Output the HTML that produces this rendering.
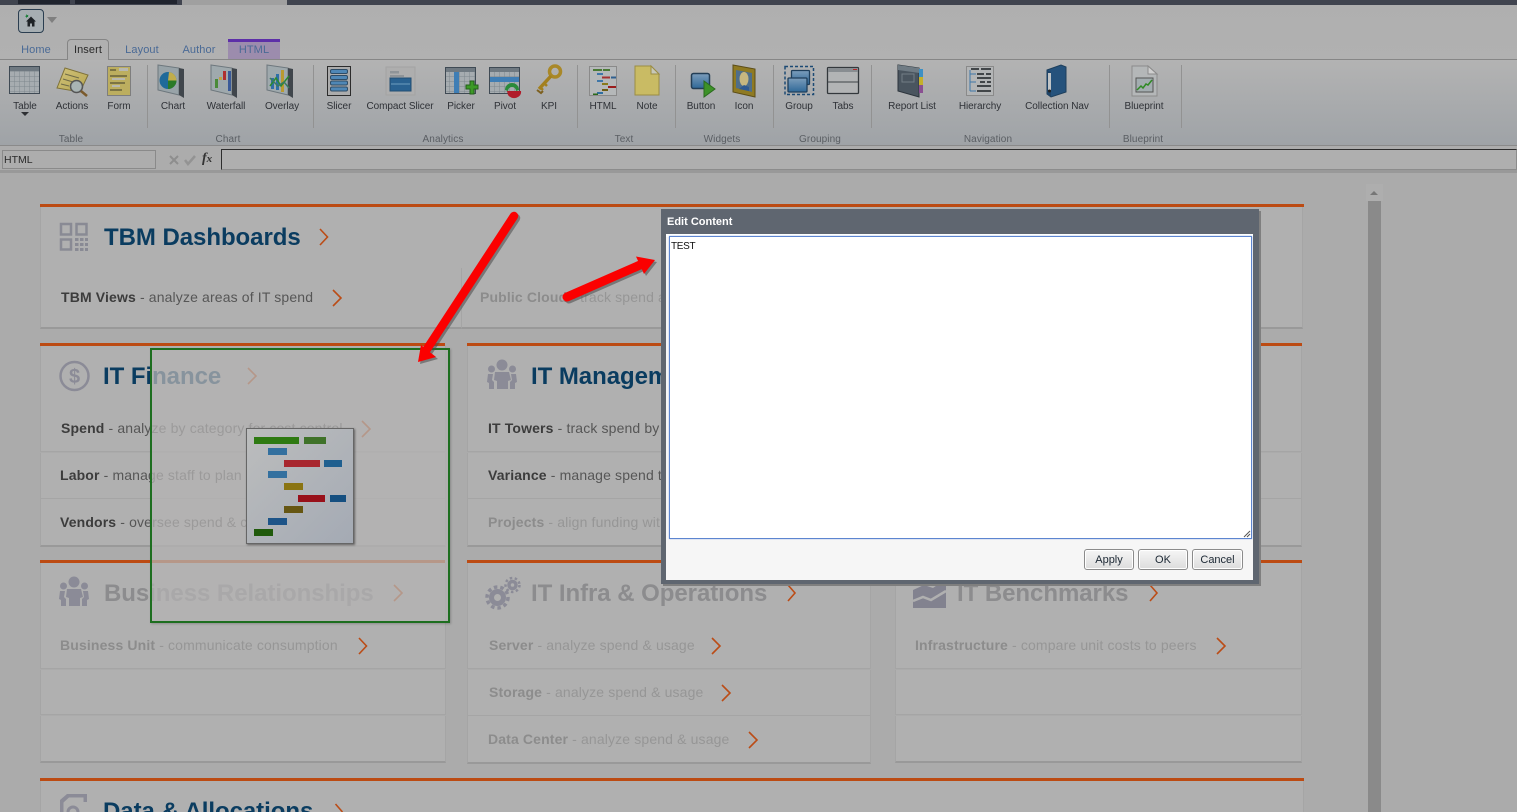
<!DOCTYPE html>
<html><head><meta charset="utf-8"><title>Edit Content</title>
<style>
html,body{margin:0;padding:0;width:1517px;height:812px;overflow:hidden;background:#ababab;font-family:"Liberation Sans",sans-serif}
body{position:relative}
div,span.a{position:absolute;box-sizing:border-box}
.o{background:#bc4b13;height:3px}
.c{background:#b0b0b0;border:1px solid #a5a5a5;border-top:0}
.e{border-bottom:2px solid #999}
.s{background:#929292;width:1px;top:65px;height:63px}
.l{font-size:10px;letter-spacing:-.05px;color:#2e3136;top:101px;line-height:12px;width:90px;text-align:center;white-space:nowrap}
.g{font-size:10px;letter-spacing:.1px;color:#5a5e63;top:134px;line-height:12px;width:90px;text-align:center}
.tb{font-size:11px;letter-spacing:.1px;color:#4a6a96;top:44px;line-height:12px;width:60px;text-align:center}
.h{font-size:24px;font-weight:bold;line-height:30px;letter-spacing:-.05px;color:#0a3c60;white-space:nowrap}
.x{color:#8c8c8e}
.r{font-size:14px;line-height:18px;letter-spacing:.14px;color:#565656;white-space:nowrap}
.r b{color:#3c3c3c}
.r.d{color:#969696}.r.d b{color:#8c8c8c}
.bar{height:7px}
.btn{top:549px;height:21px;border:1px solid #8b8b8b;border-radius:3px;background:linear-gradient(#f6f6f6,#dcdcdc);font-size:11px;line-height:21px;text-align:center;color:#1b2733;box-shadow:inset 0 0 0 1px #fff}
</style></head><body>

<!-- top bar -->
<div style="left:0;top:0;width:1517px;height:5px;background:#40444f"></div>
<div style="left:18px;top:0;width:52px;height:4px;background:#20242e"></div>
<div style="left:75px;top:0;width:102px;height:4px;background:#20242e"></div>
<div style="left:182px;top:0;width:105px;height:5px;background:#a0a0a0"></div>

<!-- ribbon -->
<div style="left:0;top:5px;width:1517px;height:54px;background:linear-gradient(#afafaf,#b1b1b1)"></div>
<div style="left:0;top:59px;width:1517px;height:87px;background:linear-gradient(#b3b3b3,#9fa3a7);border-top:1px solid #868686;border-bottom:1px solid #8a8a8a"></div>
<div style="left:18px;top:9px;width:26px;height:24px;border:1px solid #2b3e50;border-radius:4px;background:#a6aeb2"></div>
<div style="left:67px;top:39px;width:42px;height:21px;background:#b0b0b0;border:1px solid #858585;border-bottom:0;border-radius:4px 4px 0 0"></div>
<div style="left:228px;top:39px;width:52px;height:20px;background:#9c8cad;border-top:3px solid #5d2fa8"></div>
<div class="tb" style="left:6px">Home</div>
<div class="tb" style="left:58px;color:#2a2a2a">Insert</div>
<div class="tb" style="left:112px">Layout</div>
<div class="tb" style="left:169px">Author</div>
<div class="tb" style="left:224px">HTML</div>

<div class="s" style="left:147px"></div><div class="s" style="left:313px"></div><div class="s" style="left:577px"></div><div class="s" style="left:675px"></div><div class="s" style="left:773px"></div><div class="s" style="left:871px"></div><div class="s" style="left:1109px"></div><div class="s" style="left:1181px"></div>

<div class="l" style="left:-20px">Table</div><div class="l" style="left:27px">Actions</div><div class="l" style="left:74px">Form</div><div class="l" style="left:128px">Chart</div><div class="l" style="left:181px">Waterfall</div><div class="l" style="left:237px">Overlay</div><div class="l" style="left:294px">Slicer</div><div class="l" style="left:355px">Compact Slicer</div><div class="l" style="left:416px">Picker</div><div class="l" style="left:460px">Pivot</div><div class="l" style="left:504px">KPI</div><div class="l" style="left:558px">HTML</div><div class="l" style="left:602px">Note</div><div class="l" style="left:656px">Button</div><div class="l" style="left:699px">Icon</div><div class="l" style="left:754px">Group</div><div class="l" style="left:798px">Tabs</div><div class="l" style="left:867px">Report List</div><div class="l" style="left:935px">Hierarchy</div><div class="l" style="left:1012px">Collection Nav</div><div class="l" style="left:1099px">Blueprint</div>
<div class="g" style="left:26px">Table</div><div class="g" style="left:183px">Chart</div><div class="g" style="left:398px">Analytics</div><div class="g" style="left:579px">Text</div><div class="g" style="left:677px">Widgets</div><div class="g" style="left:775px">Grouping</div><div class="g" style="left:943px">Navigation</div><div class="g" style="left:1098px">Blueprint</div>

<!-- formula bar -->
<div style="left:0;top:146px;width:1517px;height:24px;background:#acacac"></div>
<div style="left:2px;top:150px;width:154px;height:19px;border:1px solid #8a8a8a;background:#adadad;font-size:10.500px;line-height:19px;color:#2a2a2a;padding-left:1px">HTML</div>
<div style="left:221px;top:149px;width:1296px;height:21px;border:1px solid #8c8c8c;border-left:1px solid #2d2d2d;border-top:1px solid #2d2d2d;background:#afafaf"></div>
<div style="left:202px;top:151px;font:italic bold 14px/16px 'Liberation Serif',serif;color:#333">f<span style="font-size:11px">x</span></div>
<div style="left:0;top:170px;width:1517px;height:3px;background:#999"></div>

<!-- scrollbar -->
<div style="left:1366px;top:184px;width:17px;height:17px;background:#aeaeae"></div>
<div style="left:1368px;top:201px;width:13px;height:611px;background:#8a8a8a"></div>

<!-- row 1 -->
<div class="c" style="left:40px;top:206px;width:1263px;height:63px"></div>
<div class="c e" style="left:40px;top:268px;width:422px;height:61px"></div>
<div class="c e" style="left:461px;top:268px;width:842px;height:61px"></div>
<div class="o" style="left:40px;top:204px;width:1264px"></div>
<div class="h" style="left:104px;top:223px">TBM Dashboards</div>
<div class="r" style="left:61px;top:288px"><b>TBM Views</b> - analyze areas of IT spend</div>
<div class="r d" style="left:480px;top:288px"><b>Public Cloud</b> - track spend and usage</div>

<!-- row 2 -->
<div class="c" style="left:40px;top:345px;width:406px;height:63px"></div>
<div class="c" style="left:40px;top:407px;width:406px;height:45px"></div>
<div class="c" style="left:40px;top:453px;width:406px;height:46px"></div>
<div class="c e" style="left:40px;top:499px;width:406px;height:48px"></div>
<div class="o" style="left:40px;top:343px;width:405px"></div>
<div class="c" style="left:467px;top:345px;width:404px;height:63px"></div>
<div class="c" style="left:467px;top:407px;width:404px;height:45px"></div>
<div class="c" style="left:467px;top:453px;width:404px;height:46px"></div>
<div class="c e" style="left:467px;top:499px;width:404px;height:48px"></div>
<div class="o" style="left:467px;top:343px;width:404px"></div>
<div class="c" style="left:895px;top:345px;width:407px;height:63px"></div>
<div class="c" style="left:895px;top:407px;width:407px;height:45px"></div>
<div class="c" style="left:895px;top:453px;width:407px;height:46px"></div>
<div class="c e" style="left:895px;top:499px;width:407px;height:48px"></div>
<div class="o" style="left:895px;top:343px;width:407px"></div>
<div class="h" style="left:103px;top:362px">IT Finance</div>
<div class="h" style="left:531px;top:362px">IT Management</div>
<div class="r" style="left:61px;top:419px"><b>Spend</b> - analyze by category for cost control</div>
<div class="r" style="left:60px;top:466px"><b>Labor</b> - manage staff to plan costs</div>
<div class="r" style="left:60px;top:513px"><b>Vendors</b> - oversee spend &amp; contracts</div>
<div class="r" style="left:488px;top:419px"><b>IT Towers</b> - track spend by tower</div>
<div class="r" style="left:488px;top:466px"><b>Variance</b> - manage spend to plan</div>
<div class="r d" style="left:488px;top:513px"><b>Projects</b> - align funding with goals</div>

<!-- row 3 -->
<div class="c" style="left:40px;top:562px;width:406px;height:63px"></div>
<div class="c" style="left:40px;top:624px;width:406px;height:45px"></div>
<div class="c" style="left:40px;top:670px;width:406px;height:45px"></div>
<div class="c e" style="left:40px;top:716px;width:406px;height:47px"></div>
<div class="o" style="left:40px;top:560px;width:405px"></div>
<div class="c" style="left:467px;top:562px;width:404px;height:63px"></div>
<div class="c" style="left:467px;top:624px;width:404px;height:45px"></div>
<div class="c" style="left:467px;top:670px;width:404px;height:46px"></div>
<div class="c e" style="left:467px;top:716px;width:404px;height:48px"></div>
<div class="o" style="left:467px;top:560px;width:404px"></div>
<div class="c" style="left:895px;top:562px;width:407px;height:63px"></div>
<div class="c" style="left:895px;top:624px;width:407px;height:45px"></div>
<div class="c" style="left:895px;top:670px;width:407px;height:45px"></div>
<div class="c e" style="left:895px;top:716px;width:407px;height:47px"></div>
<div class="o" style="left:895px;top:560px;width:407px"></div>
<div class="h x" style="left:104px;top:579px">Business Relationships</div>
<div class="h x" style="left:531px;top:579px">IT Infra &amp; Operations</div>
<div class="h x" style="left:957px;top:579px">IT Benchmarks</div>
<div class="r d" style="left:60px;top:636px"><b>Business Unit</b> - communicate consumption</div>
<div class="r d" style="left:489px;top:636px"><b>Server</b> - analyze spend &amp; usage</div>
<div class="r d" style="left:489px;top:683px"><b>Storage</b> - analyze spend &amp; usage</div>
<div class="r d" style="left:488px;top:730px"><b>Data Center</b> - analyze spend &amp; usage</div>
<div class="r d" style="left:915px;top:636px"><b>Infrastructure</b> - compare unit costs to peers</div>

<!-- row 4 -->
<div class="c" style="left:40px;top:780px;width:1264px;height:32px;border-bottom:0"></div>
<div class="o" style="left:40px;top:778px;width:1264px"></div>
<div class="h" style="left:103px;top:797px;height:15px;overflow:hidden">Data &amp; Allocations</div>

<!-- icons: ribbon + cards -->
<svg style="position:absolute;left:0;top:0" width="1517" height="812" viewBox="0 0 1517 812">
<defs>
<pattern id="gr" width="5" height="5" patternUnits="userSpaceOnUse" x="10" y="72"><rect width="5" height="5" fill="#a6acb0"/><path d="M5 0V5M0 5H5" stroke="#7e878e" stroke-width="1"/></pattern>
<linearGradient id="bl" x1="0" y1="0" x2="0" y2="1"><stop offset="0" stop-color="#7c9dbb"/><stop offset="1" stop-color="#2f6898"/></linearGradient>
<linearGradient id="gd" x1="0" y1="0" x2="1" y2="1"><stop offset="0" stop-color="#d0c27a"/><stop offset="1" stop-color="#b7a650"/></linearGradient>
</defs>
<!-- home -->
<path d="M26 21.500l5-5 5 5h-1.500v5h-2.500v-3h-2v3h-2.500v-5z" fill="#1d2226"/><path d="M26.500 14l.7 1.300 1.400-.4-.9 1.200.9 1.200-1.400-.4-.7 1.300-.2-1.500-1.400-.6 1.400-.5z" fill="#0b7a2c"/>
<path d="M47 17h10l-5 6z" fill="#7f7f7f"/>
<path d="M21 112h8l-4 4z" fill="#2d2f33"/>
<!-- X check -->
<path d="M170 156l8 8M178 156l-8 8" stroke="#8e8e8e" stroke-width="2"/><path d="M185 160l3 4 7-8" fill="none" stroke="#939393" stroke-width="2.500"/>
<path d="M1370 195l4-4 4 4z" fill="#777"/>
<!-- Table -->
<rect x="9.500" y="66.500" width="30" height="27" fill="url(#gr)" stroke="#3f4a54"/><rect x="10" y="67" width="29" height="4" fill="#6f7981"/>
<!-- Actions -->
<path d="M57 88l8-20 23 7-8 17z" fill="url(#gd)" stroke="#7e7138"/><path d="M65 74l14 4M63 79l10 3M61 84l8 2" stroke="#6e6a48"/><circle cx="76.500" cy="86.500" r="6" fill="#a9b4b4" stroke="#555"  stroke-width="1.500"/><path d="M81 91l6 5" stroke="#7b5a2c" stroke-width="2.500"/>
<!-- Form -->
<rect x="107.500" y="66.500" width="23" height="29" fill="#bcae5f" stroke="#7e7e7e"/><path d="M110 70h6M110 76h17M110 83h15M110 90h12" stroke="#3b3a28"/><rect x="119" y="68" width="9" height="3" fill="#b8b8b0"/><rect x="112" y="78" width="13" height="2" fill="#b8b8b0"/><rect x="112" y="85" width="8" height="2" fill="#b8b8b0"/>
<!-- Chart -->
<path d="M158 65l21 3v27l-21-5z" fill="#98a3a8" stroke="#6d777d"/><path d="M179 68l5 1v29l-5-3z" fill="#40464c"/><circle cx="168" cy="80.500" r="8.500" fill="#1f6a9a"/><path d="M168 80.500l1-8.500a8.500 8.500 0 0 1 7.500 8.500z" fill="#c0ad4b"/><path d="M168 80.500h8.500a8.500 8.500 0 0 1-8.500 8.500z" fill="#2a7a28"/>
<!-- Waterfall -->
<path d="M211 65l21 3v27l-21-5z" fill="#9fa9ad" stroke="#6d777d"/><path d="M232 68l5 1v29l-5-3z" fill="#40464c"/><rect x="215" y="79" width="3" height="9" fill="#4a8a3a"/><rect x="219" y="77" width="3" height="3" fill="#c0a040"/><rect x="223" y="71" width="3" height="9" fill="#b03030"/><rect x="228" y="71" width="3" height="20" fill="#3a5a98"/>
<!-- Overlay -->
<path d="M267 65l21 3v27l-21-5z" fill="#9fa9ad" stroke="#6d777d"/><path d="M288 68l5 1v29l-5-3z" fill="#40464c"/><rect x="271" y="78" width="3" height="11" fill="#2f6fa8"/><rect x="276" y="74" width="3" height="16" fill="#2f6fa8"/><rect x="281" y="70" width="3" height="22" fill="#b99a30"/><path d="M270 86l6-8 5 8 8-10" fill="none" stroke="#2a8a30" stroke-width="1.500"/><path d="M270 78l8 8 6-4 5 6" fill="none" stroke="#3a7a60" stroke-width="1.500"/>
<!-- Slicer -->
<rect x="327.500" y="66.500" width="23" height="29" fill="#acacac" stroke="#2c2c2c"/><g fill="#4f87b6" stroke="#2e4c66"><rect x="330.500" y="69.500" width="17" height="4" rx="1.500"/><rect x="330.500" y="75.500" width="17" height="4" rx="1.500"/><rect x="330.500" y="81" width="17" height="4" rx="1.500"/><rect x="330.500" y="87" width="17" height="4" rx="1.500"/></g>
<!-- Compact slicer -->
<rect x="386" y="67" width="29" height="28" fill="#aeaeae" stroke="#a3a3a3"/><rect x="390" y="71" width="9" height="2.500" fill="#8f9498"/><rect x="390" y="75" width="14" height="2" fill="#8f9498"/><rect x="390" y="78" width="21" height="13" fill="#2a6291" stroke="#234e72"/><path d="M391 84h19" stroke="#6f9dc0"/>
<!-- Picker -->
<rect x="445.500" y="67.500" width="30" height="26" fill="url(#gr)" stroke="#3f4a54"/><rect x="446" y="68" width="29" height="4" fill="#6f7981"/><rect x="454" y="72" width="5" height="21" fill="#3f7eb5"/><path d="M466 85h4v-4h4v4h4v4h-4v5h-4v-5h-4z" fill="#3c9a26" stroke="#23601a"/>
<!-- Pivot -->
<rect x="489.500" y="67.500" width="30" height="26" fill="url(#gr)" stroke="#3f4a54"/><rect x="490" y="68" width="29" height="4" fill="#6f7981"/><rect x="490" y="77" width="29" height="5" fill="#3f7eb5"/><path d="M505 90a7 7 0 0 1 14 0l-3 1a4 4 0 0 0-8 0z" fill="#2a8a3a"/><path d="M507 91h14a7 6 0 0 1-13 4z" fill="#b01c2a"/>
<!-- KPI -->
<circle cx="555" cy="71.500" r="5.500" fill="none" stroke="#a98828" stroke-width="3.500"/><path d="M551 76l-12 13" stroke="#a3801f" stroke-width="3.500"/><path d="M540 87l3 3M544 83l3 3" stroke="#a3801f" stroke-width="2.500"/><path d="M537 90l4 3 2-2" fill="none" stroke="#7d6020" stroke-width="2"/>
<!-- HTML -->
<rect x="589.500" y="66.500" width="27" height="29" fill="#b5b8b9" stroke="#8a8a8a"/><rect x="593" y="69" width="9" height="2" fill="#4a7a35"/><rect x="603" y="69" width="7" height="2" fill="#4a7a35"/><rect x="597" y="73" width="6" height="2" fill="#3f77a8"/><rect x="602" y="76.500" width="8" height="2" fill="#a53030"/><rect x="611" y="76.500" width="5" height="2" fill="#2f5f8f"/><rect x="597" y="80" width="6" height="2" fill="#3f77a8"/><rect x="602" y="83" width="6" height="2" fill="#8a7a1a"/><rect x="608" y="86" width="8" height="2" fill="#9a1c1c"/><rect x="602" y="89" width="6" height="2" fill="#6d5d14"/><rect x="597" y="92" width="6" height="2" fill="#2f6fa0"/><rect x="593" y="93.500" width="5" height="1.500" fill="#2b6a1c"/>
<!-- Note -->
<path d="M635 66h16l8 8v21h-24z" fill="#c9bb64" stroke="#9a8d44"/><path d="M651 66v8h8z" fill="#c8c8b8" stroke="#9a8d44"/>
<!-- Button -->
<rect x="691.500" y="73.500" width="18" height="15" rx="2" fill="url(#bl)" stroke="#233e56" stroke-width="1.500"/><path d="M704 81l11 8-11 8z" fill="#3d9228" stroke="#2a6a1e"/>
<!-- Icon -->
<path d="M733 65l22 4v28l-22-5z" fill="#8f7a22" stroke="#5c4d18"/><path d="M736 70l16 3v19l-16-4z" fill="#4f6e8a"/><ellipse cx="744" cy="79" rx="4.500" ry="7" fill="#c7b780"/><path d="M739 89l10 2v-4l-5-2z" fill="#2f5a90"/>
<!-- Group -->
<rect x="785" y="66.500" width="28.500" height="28" fill="none" stroke="#1c4a74" stroke-width="1.500" stroke-dasharray="3 2"/><rect x="791.500" y="70.500" width="18" height="14" rx="1" fill="url(#bl)" stroke="#1f3f5c" stroke-width="1.300"/><rect x="788" y="78" width="19" height="14" rx="1" fill="url(#bl)" stroke="#1f3f5c" stroke-width="1.300"/>
<!-- Tabs -->
<rect x="827.500" y="67.500" width="31" height="26" rx="1" fill="#b2b4b5" stroke="#33383c" stroke-width="1.300"/><rect x="828" y="68" width="30" height="4" fill="#888d91"/><path d="M828 82h30" stroke="#3f4448"/><path d="M853 69.500h4" stroke="#b52a2a"/>
<!-- Report list -->
<path d="M898 65l21 3v29l-21-6z" fill="#4a555f" stroke="#2c343c"/><path d="M898 65l21 3 .5 5-21.500-3z" fill="#6f7b84"/><rect x="902" y="74" width="12" height="8" fill="none" stroke="#727d85"/><rect x="919" y="69" width="4" height="8" fill="#3d90c4"/><rect x="919" y="77" width="4" height="8" fill="#c4b02a"/><rect x="919" y="85" width="4" height="8" fill="#8a4f92"/>
<!-- Hierarchy -->
<rect x="966.500" y="66.500" width="27" height="29" fill="#b3b5b6" stroke="#8a8a8a"/><path d="M970 70v21M970 74h6M970 82h6M970 91h6" fill="none" stroke="#3f78a8"/><path d="M971 69h8M981 69h10M977 74h7M986 74h5M977 78h14M980 82h5M987 82h4M977 86h14M977 91h14" stroke="#33373a" stroke-width="1.800"/>
<!-- Collection -->
<path d="M1047 70l14-5 5 2v25l-15 5-4-3z" fill="#25527c" stroke="#1e3f5c"/><path d="M1051 72v25l-4-3V70z" fill="#1f4468"/><rect x="1048" y="73" width="3" height="17" fill="#c0c4c6"/><circle cx="1049.500" cy="91" r="1.500" fill="#222"/>
<!-- Blueprint -->
<path d="M1132 66h16l9 8v22h-25z" fill="#b4b7b8" stroke="#8b8b8b"/><path d="M1148 66v8h9z" fill="#cfcfcf" stroke="#8b8b8b"/><rect x="1136" y="78" width="17" height="14" fill="#a3adb0" stroke="#555"/><path d="M1137 90l4-4 2 2 3-4 2 1 4-5" fill="none" stroke="#2f8a24" stroke-width="1.500"/>

<!-- grid icon -->
<g fill="none" stroke="#898a94" stroke-width="2.500"><rect x="61" y="224" width="10" height="10.500"/><rect x="76.500" y="224" width="10" height="10.500"/><rect x="61" y="239.500" width="10" height="10"/></g>
<g fill="#898a94"><rect x="75" y="238" width="3.500" height="3"/><rect x="80" y="238" width="3.500" height="3"/><rect x="85" y="238" width="3" height="3"/><rect x="75" y="243" width="3.500" height="3"/><rect x="80" y="243" width="3.500" height="3"/><rect x="85" y="243" width="3" height="3"/><rect x="75" y="248" width="3.500" height="3"/><rect x="80" y="248" width="3.500" height="3"/><rect x="85" y="248" width="3" height="3"/></g>
<!-- dollar -->
<circle cx="74.500" cy="376" r="14" fill="none" stroke="#8b8b97" stroke-width="2.500"/><text x="74.500" y="383" text-anchor="middle" font-family="Liberation Sans" font-weight="bold" font-size="20" fill="#8b8b97">$</text>
<!-- people -->
<g fill="#8b8b97"><circle cx="502" cy="365" r="5.500"/><path d="M495 372h14l2 8-3 1v8h-11v-8l-3-1z"/><circle cx="491.500" cy="369" r="3.500"/><path d="M488 374h5l-1 6 2 2v7h-5v-6l-2-1z"/><circle cx="512.500" cy="369" r="3.500"/><path d="M511 374h5l1 8-2 1v6h-5v-7l2-2z"/></g>
<g fill="#8b8b97"><circle cx="74" cy="582" r="5.500"/><path d="M67 589h14l2 8-3 1v8H69v-8l-3-1z"/><circle cx="63.500" cy="586" r="3.500"/><path d="M60 591h5l-1 6 2 2v7h-5v-6l-2-1z"/><circle cx="84.500" cy="586" r="3.500"/><path d="M83 591h5l1 8-2 1v6h-5v-7l2-2z"/></g>
<!-- gears -->
<g fill="none" stroke="#8b8b97"><circle cx="497.500" cy="597.500" r="6" stroke-width="5"/><circle cx="497.500" cy="597.500" r="10.500" stroke-width="3.500" stroke-dasharray="3.500 3"/><circle cx="512.500" cy="585" r="3.500" stroke-width="3.500"/><circle cx="512.500" cy="585" r="7" stroke-width="2.500" stroke-dasharray="2.500 2.500"/></g>
<!-- benchmark -->
<path d="M913 590l11-5 9 3 13-9v29h-33z" fill="#82828f"/><path d="M913 601l10-4 8 3 15-9" fill="none" stroke="#b0b0b0" stroke-width="2.500"/>
<!-- data -->
<path d="M60 812v-12l7-6h20v8h-3.500v-4.500H69l-5.500 5v9.500z" fill="#8b8b97"/><circle cx="73" cy="812" r="5" fill="none" stroke="#8b8b97" stroke-width="3"/>
<!-- chevrons -->
<g fill="none" stroke="#bb4c16" stroke-width="1.600"><path d="M320 229l7.500 8-7.500 8"/><path d="M333 290l8 8-8 8"/><path d="M788 585l7 8-7 8"/><path d="M1150 585l7 8-7 8"/><path d="M359 638l7.500 8-7.500 8"/><path d="M712 638l8 8-8 8"/><path d="M722 685l8 8-8 8"/><path d="M749 732l8 8-8 8"/><path d="M1217 638l8 8-8 8"/><path d="M335.500 804l7 8"/><path d="M248 368l8 8-8 8"/><path d="M362 421l8 8-8 8"/><path d="M394 585l8 8-8 8"/></g>
</svg>

<!-- drag rectangle -->
<div style="left:150px;top:348px;width:300px;height:275px;border:2px solid #1d6e1f;background:rgba(180,178,178,.74);box-shadow:1px 1px 2px rgba(0,0,0,.2)"></div>
<div style="left:246px;top:428px;width:108px;height:116px;border:1px solid #666;background:linear-gradient(135deg,#bcbdbd,#a4aab4);box-shadow:1px 1px 2px rgba(0,0,0,.45)"></div>
<div class="bar" style="left:254px;top:437px;width:45px;background:#2e7a12"></div>
<div class="bar" style="left:304px;top:437px;width:22px;background:#3f7229"></div>
<div class="bar" style="left:268px;top:448px;width:19px;background:#33709f"></div>
<div class="bar" style="left:284px;top:460px;width:36px;background:#a8272f"></div>
<div class="bar" style="left:324px;top:460px;width:18px;background:#1f5f8f"></div>
<div class="bar" style="left:268px;top:471px;width:19px;background:#33709f"></div>
<div class="bar" style="left:284px;top:483px;width:19px;background:#8a7412"></div>
<div class="bar" style="left:298px;top:495px;width:27px;background:#98101a"></div>
<div class="bar" style="left:330px;top:495px;width:16px;background:#154f80"></div>
<div class="bar" style="left:284px;top:506px;width:19px;background:#665612"></div>
<div class="bar" style="left:268px;top:518px;width:19px;background:#1d5488"></div>
<div class="bar" style="left:254px;top:529px;width:19px;background:#205a0c"></div>

<!-- red arrows -->
<svg style="position:absolute;left:0;top:0" width="1517" height="812" viewBox="0 0 1517 812">
<g opacity=".55" transform="translate(2 2)">
<path d="M514 216L427 349" stroke="#4a4a4a" stroke-width="8.500" stroke-linecap="round" fill="none"/><path d="M418 362l3-17 15 12z" fill="#4a4a4a"/>
<path d="M567 297L640 265" stroke="#4a4a4a" stroke-width="9" stroke-linecap="round" fill="none"/><path d="M655 260l-19-3.500 8 17.500z" fill="#4a4a4a"/>
</g>
<path d="M514 216L427 349" stroke="#fb0000" stroke-width="8.500" stroke-linecap="round" fill="none"/><path d="M418 362l3-17 15 12z" fill="#fb0000"/>
<path d="M567 297L640 265" stroke="#fb0000" stroke-width="9" stroke-linecap="round" fill="none"/><path d="M655 260l-19-3.500 8 17.500z" fill="#fb0000"/>
</svg>

<!-- dialog -->
<div style="left:661px;top:209px;width:598px;height:375px;background:#5f6670;box-shadow:2px 2px 0 #7f7f7f"></div>
<div style="left:667px;top:215px;font-size:11px;font-weight:bold;line-height:14px;color:#fff">Edit Content</div>
<div style="left:666px;top:234px;width:587px;height:346px;background:#f6f6f6"></div>
<div style="left:666px;top:234px;width:587px;height:3px;background:#fff"></div>
<div style="left:669px;top:236px;width:583px;height:303px;background:#fff;border:1px solid #5c85d0;box-shadow:0 0 1px #7ea0e0"></div>
<div style="left:671px;top:241px;font-size:10px;letter-spacing:-.3px;line-height:12px;color:#111">TEST</div>
<svg style="position:absolute;left:1243px;top:530px" width="8" height="8"><path d="M1 7l6-6M4 7l3-3" stroke="#555" stroke-width="1" fill="none"/></svg>
<div class="btn" style="left:1084px;width:50px">Apply</div>
<div class="btn" style="left:1138px;width:50px">OK</div>
<div class="btn" style="left:1192px;width:51px">Cancel</div>
</body></html>
